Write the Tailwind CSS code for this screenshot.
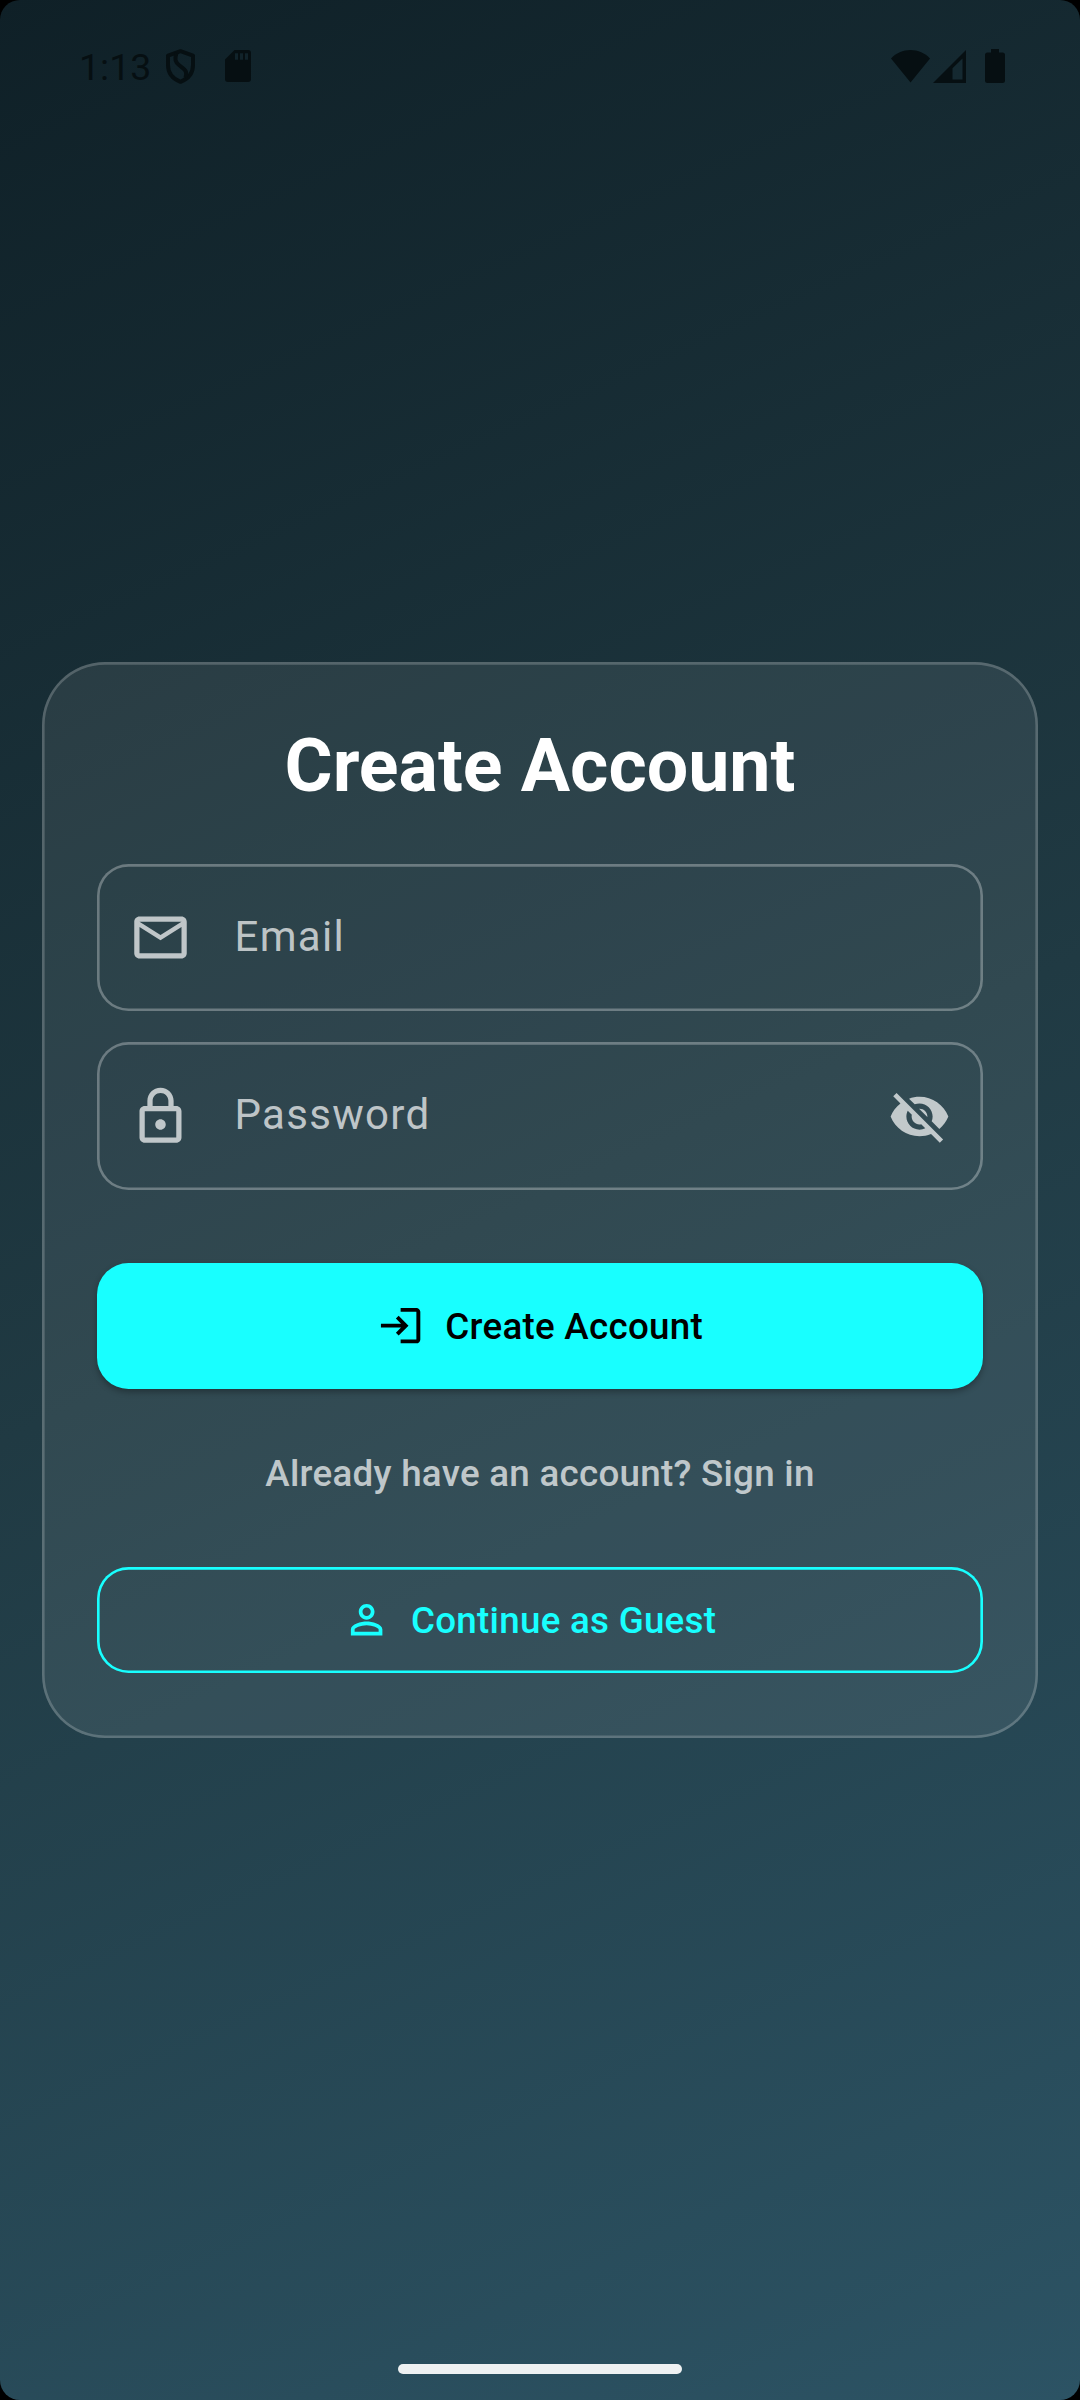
<!DOCTYPE html>
<html lang="en">
<head>
<meta charset="utf-8">
<title>Create Account</title>
<script src="https://cdn.jsdelivr.net/npm/@tailwindcss/browser@4"></script>
</head>
<body class="bg-black">
<div class="relative flex h-[2400px] w-[1080px] flex-col overflow-hidden rounded-[20px] bg-[linear-gradient(155.772deg,#0f2027,#203a43,#2c5364)] font-['Roboto',sans-serif]">

  <!-- Status bar -->
  <header class="flex h-[132px] shrink-0 items-center justify-between pr-[75px] pl-[79px] text-[#060f12]">
    <div class="flex items-center">
      <span class="w-[87px] pt-[2px] text-[37.5px] leading-[42px]">1:13</span>
      <svg class="h-[35px] w-[29px]" viewBox="0 0 29 35" fill="none" stroke="currentColor" stroke-width="4">
        <path d="M14.5 2.2 27 6.6V16c0 8-5 14-12.500 16.800C7 30 2 24 2 16V6.600z" stroke-linejoin="round"/>
        <path d="M10.500 4C8.500 10 9 13 13.500 16.500S22 21.500 19.500 29"/>
      </svg>
      <svg class="ml-[30px] h-[32px] w-[26px]" viewBox="0 0 26 32" fill="currentColor" fill-rule="evenodd">
        <path d="M9.500 0H23a3 3 0 0 1 3 3v26a3 3 0 0 1-3 3H3a3 3 0 0 1-3-3V9.500zM10 3.300v6.400h3V3.300zm5 0v6.400h3V3.300zm5 0v6.400h3V3.300z"/>
      </svg>
    </div>
    <div class="flex items-center">
      <svg class="h-[33px] w-[39px]" viewBox="0 0 39 33" fill="currentColor"><path d="M0 8.500C5 3 12 0 19.500 0S34 3 39 8.500L19.500 32.500z"/></svg>
      <svg class="ml-[3px] h-[33px] w-[33px]" viewBox="0 0 33 33" fill="currentColor" fill-rule="evenodd"><path d="M33 0v33H0zM29.500 8.500l-10 9.800V29.500h10z"/></svg>
      <svg class="ml-[19px] h-[34px] w-[20px]" viewBox="0 0 20 34" fill="currentColor"><path d="M6 0h8v3.500h3.500A2.500 2.500 0 0 1 20 6v25.500a2.500 2.500 0 0 1-2.500 2.500h-15A2.500 2.500 0 0 1 0 31.500V6a2.500 2.500 0 0 1 2.500-2.500H6z"/></svg>
    </div>
  </header>

  <!-- Sign-up card -->
  <main class="mx-[42px] mt-[530px] flex h-[1076px] shrink-0 flex-col rounded-[63px] bg-white/8 px-[55px] pt-[62px] shadow-[inset_0_0_0_2.625px_rgba(255,255,255,0.2)]">
    <h1 class="text-center text-[73.5px] leading-[84px] font-bold text-white">Create Account</h1>

    <div class="mt-14 flex h-[147px] items-center rounded-[31.5px] px-[32px] text-white/70 shadow-[inset_0_0_0_2.625px_rgba(255,255,255,0.3)]">
      <svg class="size-[63px]" viewBox="0 0 24 24" fill="currentColor"><path d="M22 6c0-1.100-.9-2-2-2H4c-1.100 0-2 .9-2 2v12c0 1.100.9 2 2 2h16c1.100 0 2-.9 2-2V6zm-2 0-8 5-8-5h16zm0 12H4V8l8 5 8-5v10z"/></svg>
      <span class="ml-[42.500px] pb-[1px] text-[42px] leading-[50px] tracking-[1.3125px]">Email</span>
    </div>

    <div class="mt-[31px] flex h-[148px] items-center rounded-[31.5px] px-[32px] text-white/70 shadow-[inset_0_0_0_2.625px_rgba(255,255,255,0.3)]">
      <svg class="size-[63px]" viewBox="0 0 24 24" fill="currentColor"><path d="M18 8h-1V6c0-2.760-2.240-5-5-5S7 3.240 7 6v2H6c-1.100 0-2 .9-2 2v10c0 1.100.9 2 2 2h12c1.100 0 2-.9 2-2V10c0-1.100-.9-2-2-2zM9 6c0-1.660 1.340-3 3-3s3 1.340 3 3v2H9V6zm9 14H6V10h12v10zm-6-3c1.100 0 2-.9 2-2s-.9-2-2-2-2 .9-2 2 .9 2 2 2z"/></svg>
      <span class="ml-[42.500px] grow pb-[3px] text-[42px] leading-[50px] tracking-[1.3125px]">Password</span>
      <svg class="size-[63px]" viewBox="0 0 24 24" fill="currentColor"><path d="M12 7c2.760 0 5 2.240 5 5 0 .65-.13 1.260-.36 1.830l2.920 2.920c1.510-1.260 2.700-2.890 3.430-4.750-1.730-4.390-6-7.500-11-7.500-1.400 0-2.740.25-3.980.7l2.160 2.160C10.740 7.130 11.350 7 12 7zM2 4.270l2.280 2.280.46.46C3.080 8.300 1.780 10.020 1 12c1.730 4.390 6 7.500 11 7.500 1.550 0 3.030-.3 4.380-.84l.42.42L19.730 22 21 20.730 3.270 3 2 4.270zM7.530 9.800l1.550 1.550c-.05.21-.08.43-.08.65 0 1.660 1.340 3 3 3 .22 0 .44-.03.65-.08l1.550 1.550c-.67.33-1.410.53-2.200.53-2.760 0-5-2.240-5-5 0-.79.2-1.530.53-2.200zm4.310-.78 3.150 3.150.02-.16c0-1.660-1.340-3-3-3l-.17.01z"/></svg>
    </div>

    <button class="mt-[73px] flex h-[126px] items-center justify-center gap-[21px] rounded-[31.5px] bg-[#18ffff] text-[36.75px] leading-[52px] font-medium tracking-[0.2625px] text-black shadow-[0_3px_6px_rgba(0,0,0,0.3)]">
      <svg class="size-[47.25px]" viewBox="0 0 24 24" fill="currentColor"><path d="M11 7 9.600 8.400l2.600 2.600H2v2h10.200l-2.600 2.600L11 17l5-5-5-5zm9 12h-8v2h8c1.100 0 2-.9 2-2V5c0-1.100-.9-2-2-2h-8v2h8v14z"/></svg>
      <span class="pt-[2px]">Create Account</span>
    </button>

    <a class="mt-[59px] block text-center text-[36.75px] leading-[52px] font-medium tracking-[0.2625px] text-white/70">Already have an account? Sign in</a>

    <button class="mt-[67px] flex h-[106px] items-center justify-center gap-[21px] rounded-[31.5px] pr-[21px] text-[36.75px] leading-[52px] font-medium tracking-[0.2625px] text-[#18ffff] shadow-[inset_0_0_0_2.625px_#18ffff]">
      <svg class="size-[47.25px]" viewBox="0 0 24 24" fill="currentColor"><path d="M12 5.900a2.100 2.100 0 1 1 0 4.200 2.100 2.100 0 0 1 0-4.200m0 9c2.970 0 6.100 1.460 6.100 2.100v1.100H5.900V17c0-.64 3.130-2.100 6.100-2.100M12 4C9.790 4 8 5.790 8 8s1.790 4 4 4 4-1.790 4-4-1.790-4-4-4zm0 9c-2.670 0-8 1.340-8 4v3h16v-3c0-2.660-5.330-4-8-4z"/></svg>
      <span class="pt-[2px]">Continue as Guest</span>
    </button>
  </main>

  <!-- Gesture bar -->
  <div class="mx-auto mt-auto mb-[26px] h-[10px] w-[284px] shrink-0 rounded-full bg-[#eef1f2]"></div>
</div>
</body>
</html>
